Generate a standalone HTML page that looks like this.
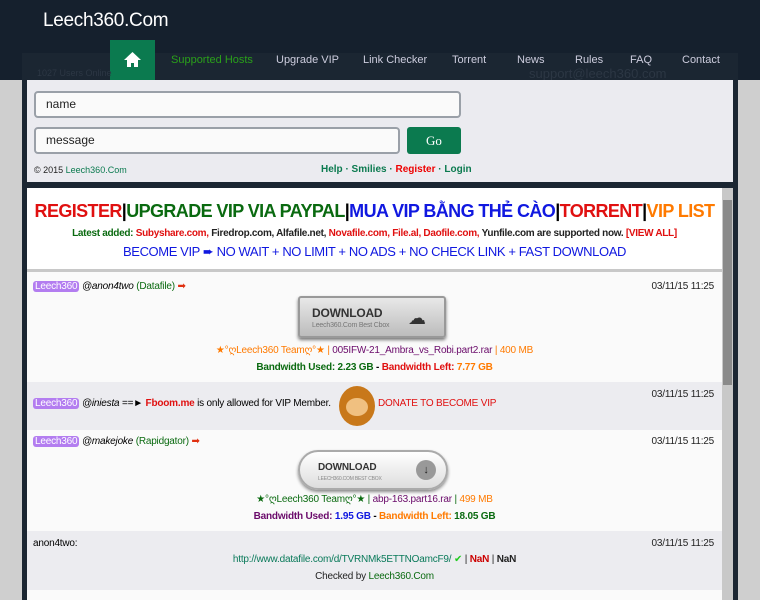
<!DOCTYPE html>
<html><head><meta charset="utf-8"><style>
*{box-sizing:border-box;margin:0;padding:0}
body{width:760px;height:600px;overflow:hidden;background:#cfcfcf;font-family:"Liberation Sans",sans-serif;position:relative}
.hdr{position:absolute;left:0;top:0;width:760px;height:80px;background:#15202d}
.logo{position:absolute;left:43px;top:10px;color:#fff;font-size:19px;letter-spacing:-0.3px}
.home{position:absolute;left:110px;top:40px;width:45px;height:40px;background:#0b7a4f}
.nav{position:absolute;top:54px;font-size:11px;color:#ccd}
.frame{position:absolute;left:22px;top:53px;width:716px;height:547px;background:#1b2632}
.top{position:absolute;left:27px;top:80px;width:706px;height:102px;background:#ebebf0}
.inp{position:absolute;background:#fafafa;border:2px solid #9aa0a8;border-radius:4px;font-size:12px;padding-left:10px;line-height:22px;color:#222}
.go{position:absolute;left:407px;top:127px;width:54px;height:27px;background:#0b7a4f;border-radius:3px;color:#fff;text-align:center;line-height:27px;font-size:13px;font-family:"Liberation Serif",serif}
.box{position:absolute;left:27px;top:188px;width:706px;height:412px;background:#fafafa}
.sb{position:absolute;left:722px;top:188px;width:11px;height:412px;background:#c8c8c8}
.row{position:absolute;left:27px;width:695px;font-size:10px;letter-spacing:-0.2px}
.c{text-align:center;position:absolute;left:0;width:695px;white-space:nowrap}
.tag{background:#b37df0;color:#fff;border-radius:3px;padding:0 2px}
.dt{position:absolute;right:8px;font-size:10px;color:#222}
b{font-weight:bold}
</style></head><body>
<div class="hdr"></div>
<div class="frame"></div>
<div class="logo">Leech360.Com</div>
<div class="home"><svg width="45" height="40"><path d="M22.5 12 L14 20 H17 V27 H21 V23 H24 V27 H28 V20 H31 Z" fill="#fff"/></svg></div>
<div class="nav" style="left:171px;color:#2aa01a">Supported Hosts</div>
<div class="nav" style="left:276px">Upgrade VIP</div>
<div class="nav" style="left:363px">Link Checker</div>
<div class="nav" style="left:452px">Torrent</div>
<div class="nav" style="left:517px">News</div>
<div class="nav" style="left:575px">Rules</div>
<div class="nav" style="left:630px">FAQ</div>
<div class="nav" style="left:682px">Contact</div>
<div class="nav" style="left:37px;top:68px;font-size:9px;color:#2c3744">1027 Users Online</div>
<div class="nav" style="left:529px;top:66px;font-size:13px;color:#2c3744">support@leech360.com</div>
<div class="top"></div>
<div class="inp" style="left:34px;top:91px;width:427px;height:27px">name</div>
<div class="inp" style="left:34px;top:127px;width:366px;height:27px">message</div>
<div class="go">Go</div>
<div style="position:absolute;left:34px;top:165px;font-size:9px;color:#222">© 2015 <span style="color:#0b7a4f">Leech360.Com</span></div>
<div style="position:absolute;left:321px;top:164px;font-size:10px;font-weight:bold;color:#0b7a4f">Help · Smilies · <span style="color:#e00">Register</span> · Login</div>
<div class="box"></div>
<div class="sb"><div style="position:absolute;left:1px;top:12px;width:9px;height:185px;background:#8a8a8a"></div></div>
<div class="row" style="top:188px;height:84px;background:#fff;border-bottom:3px solid #c8c8c8">
<div class="c" style="top:13px;font-size:18px;font-weight:bold;letter-spacing:-0.6px"><span style="color:#e01010">REGISTER</span>|<span style="color:#0a6a10">UPGRADE VIP VIA PAYPAL</span>|<span style="color:#1018e0">MUA VIP BẰNG THẺ CÀO</span>|<span style="color:#e01010">TORRENT</span>|<span style="color:#ff7a00">VIP LIST</span></div>
<div class="c" style="top:40px;font-size:10px;font-weight:bold;color:#222;letter-spacing:-0.3px"><span style="color:#0a6a10">Latest added:</span> <span style="color:#e01010">Subyshare.com,</span> Firedrop.com, Alfafile.net, <span style="color:#e01010">Novafile.com, File.al, Daofile.com,</span> Yunfile.com are supported now. <span style="color:#e01010">[VIEW ALL]</span></div>
<div class="c" style="top:56px;font-size:13px;color:#1018e0;letter-spacing:-0.4px">BECOME VIP ➨ NO WAIT + NO LIMIT + NO ADS + NO CHECK LINK + FAST DOWNLOAD</div>
</div>
<div class="row" style="top:272px;height:110px;background:#fafafa">
<div style="position:absolute;left:6px;top:9px"><span class="tag">Leech360</span> <i>@anon4two</i> <span style="color:#0a6a10">(Datafile)</span> <span style="color:#e03010">➡</span></div>
<div class="dt" style="top:9px">03/11/15 11:25</div>
<div style="position:absolute;left:271px;top:24px;width:148px;height:42px;background:linear-gradient(#e8e8e8,#bcbcbc);border:2px solid #999;border-radius:3px;box-shadow:0 2px 3px #777">
<div style="position:absolute;left:12px;top:8px;font-size:12px;font-weight:bold;color:#333">DOWNLOAD</div>
<div style="position:absolute;left:12px;top:24px;font-size:7px;color:#777">Leech360.Com Best Cbox</div>
<div style="position:absolute;left:108px;top:10px;font-size:18px;color:#333">☁</div></div>
<div class="c" style="top:73px;color:#ff7a00">★°ღLeech360 Teamღ°★ | <span style="color:#6a0a6a">005IFW-21_Ambra_vs_Robi.part2.rar</span> | 400 MB</div>
<div class="c" style="top:90px;font-weight:bold"><span style="color:#0a6a10">Bandwidth Used: 2.23 GB</span> - <span style="color:#e01010">Bandwidth Left:</span> <span style="color:#ff7a00">7.77 GB</span></div>
</div>
<div class="row" style="top:382px;height:48px;background:#ececf0">
<div style="position:absolute;left:6px;top:16px"><span class="tag">Leech360</span> <i>@iniesta</i> ==► <b style="color:#e01010">Fboom.me</b> is only allowed for VIP Member.</div>
<div style="position:absolute;left:312px;top:4px;width:36px;height:40px;border-radius:50%;background:#c8781a"><div style="position:absolute;left:7px;top:12px;width:22px;height:18px;border-radius:50%;background:#f0c080"></div></div>
<div style="position:absolute;left:351px;top:16px;color:#e01010">DONATE TO BECOME VIP</div>
<div class="dt" style="top:7px">03/11/15 11:25</div>
</div>
<div class="row" style="top:430px;height:101px;background:#fafafa">
<div style="position:absolute;left:6px;top:6px"><span class="tag">Leech360</span> <i>@makejoke</i> <span style="color:#0a6a10">(Rapidgator)</span> <span style="color:#e03010">➡</span></div>
<div class="dt" style="top:6px">03/11/15 11:25</div>
<div style="position:absolute;left:271px;top:20px;width:150px;height:40px;background:linear-gradient(#fff,#ddd);border:2px solid #aaa;border-radius:20px;box-shadow:0 2px 3px #888">
<div style="position:absolute;left:18px;top:10px;font-size:10px;font-weight:bold;color:#333">DOWNLOAD</div>
<div style="position:absolute;left:18px;top:24px;font-size:5px;color:#888">LEECH360.COM BEST CBOX</div>
<div style="position:absolute;left:116px;top:8px;width:20px;height:20px;border-radius:50%;background:#999;color:#222;text-align:center;font-size:11px;line-height:20px">↓</div></div>
<div class="c" style="top:64px;color:#0a6a10">★°ღLeech360 Teamღ°★ | <span style="color:#6a0a6a">abp-163.part16.rar</span> | <span style="color:#ff7a00">499 MB</span></div>
<div class="c" style="top:81px;font-weight:bold"><span style="color:#6a0a6a">Bandwidth Used:</span> <span style="color:#1018e0">1.95 GB</span> - <span style="color:#ff7a00">Bandwidth Left:</span> <span style="color:#0a6a10">18.05 GB</span></div>
</div>
<div class="row" style="top:531px;height:59px;background:#ececf0">
<div style="position:absolute;left:6px;top:7px">anon4two:</div>
<div class="dt" style="top:7px">03/11/15 11:25</div>
<div class="c" style="top:23px;color:#0a7a5a">http://www.datafile.com/d/TVRNMk5ETTNOamcF9/ <span style="color:#2c2">✔</span> <span style="color:#222">| <b style="color:#c00">NaN</b> | <b>NaN</b></span></div>
<div class="c" style="top:40px;color:#222">Checked by <span style="color:#0a6a10">Leech360.Com</span></div>
</div>
</body></html>
